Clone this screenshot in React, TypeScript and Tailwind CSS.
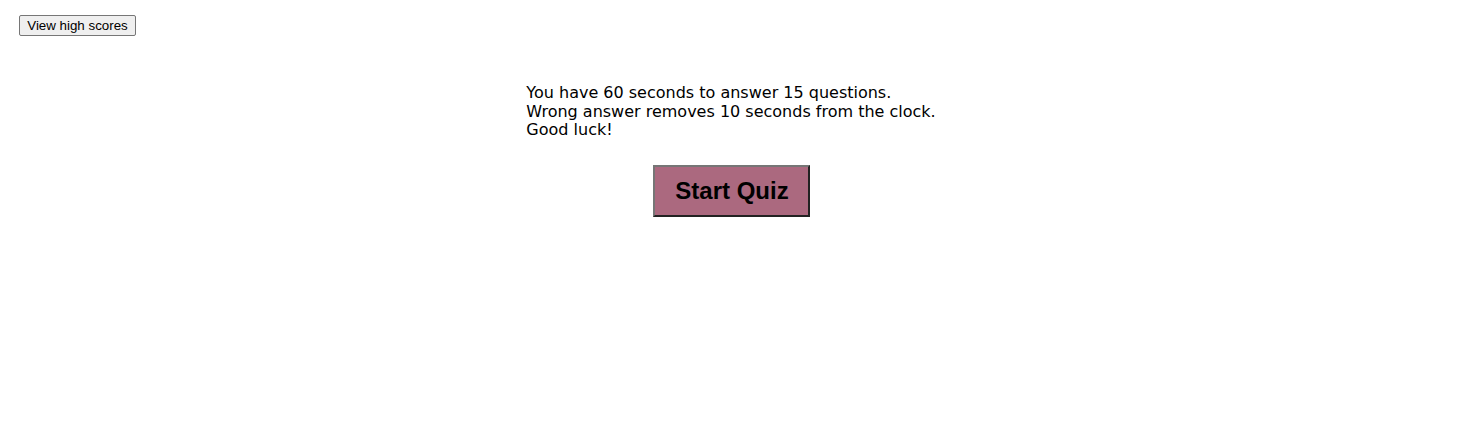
import React from "react";

export default function App() {
  return (
    <div className="min-h-[427px] bg-white text-black">
      <div className="pl-[19px] pt-[15px]">
        <button className="block h-[21px] w-[117px] rounded-[2px] border border-[#767676] bg-[#efefef] px-[6px] text-[13.33px] leading-none text-black [font-family:'Liberation_Sans',Arial,sans-serif]">
          View high scores
        </button>
      </div>
      <div className="mt-[48px] flex justify-center pr-[8px]">
        <div className="flex flex-col items-stretch">
          <p className="text-[16px] leading-[18.5px] [font-family:'DejaVu_Sans',Verdana,sans-serif]">
            You have 60 seconds to answer 15 questions.
            <br />
            Wrong answer removes 10 seconds from the clock.
            <br />
            Good luck!
          </p>
          <div className="mt-[25px] flex justify-center pl-[2px]">
            <button className="h-[52px] w-[157px] border-2 border-t-[#767676] border-l-[#767676] border-b-[#222222] border-r-[#222222] bg-[#ab697f] text-[24px] font-bold text-black [font-family:'Liberation_Sans',Arial,sans-serif]">
              Start Quiz
            </button>
          </div>
        </div>
      </div>
    </div>
  );
}
